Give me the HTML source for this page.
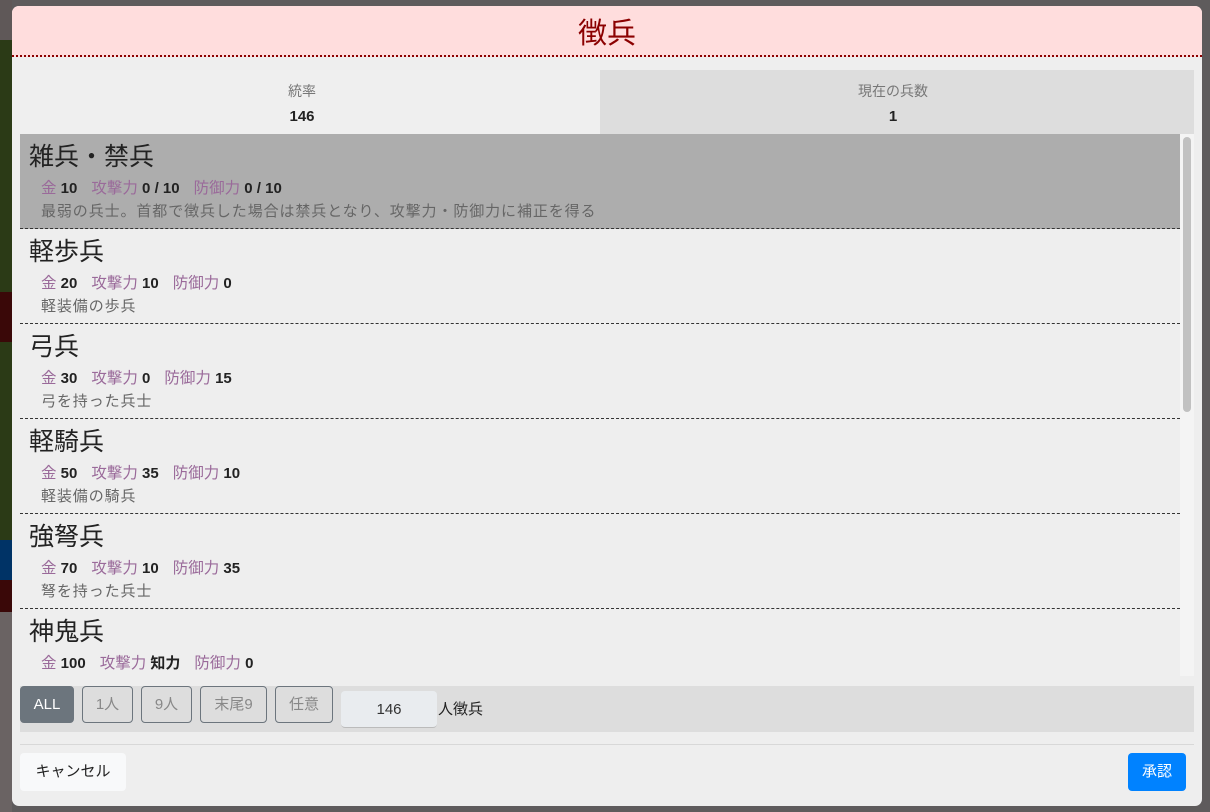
<!DOCTYPE html>
<html><head><meta charset="utf-8"><style>
*{box-sizing:border-box;margin:0;padding:0}
body{width:1210px;height:812px;overflow:hidden;background:#5e5b5c;font-family:"Liberation Sans","Noto Sans CJK JP",sans-serif;position:relative}
.bg{position:absolute;left:0;width:12px}
.modal{position:absolute;left:12px;top:6px;width:1190px;height:800px;background:#eee;border-radius:7px;overflow:hidden}
.hd{height:51px;background:#fdd;border-bottom:2px dotted #8b0000;text-align:center;color:#8b0000;font-size:29px;line-height:56px}
.stats{position:absolute;top:64px;left:8px;width:1174px;height:64px;display:flex}
.stats div{text-align:center;color:#777;font-size:14px;padding-top:11px}
.stats b{display:block;color:#222;font-size:15px;margin-top:7px}
.list{position:absolute;top:128px;left:8px;width:1160px;height:542px;overflow:hidden}
.sb{position:absolute;top:128px;left:1168px;width:14px;height:542px;background:#f4f4f4}
.sb div{position:absolute;left:3px;top:3px;width:8px;height:275px;background:#c1c1c1;border-radius:4px}
.it{height:95px;border-bottom:1px dashed #333;padding:9px 0 0 9px}
.it.sel{background:#adadad}
.t{font-size:25px;color:#222;line-height:29px}
.s{font-size:15px;color:#222;font-weight:bold;margin:8px 0 0 12px;line-height:18px}
.s span{color:#9a6a9a;font-weight:normal;font-size:15.5px}
.s i{display:inline-block;width:14px}
.d{font-size:15px;color:#666;margin:5px 0 0 12px;line-height:17px;letter-spacing:0.9px}
.bar{position:absolute;top:680px;left:8px;width:1174px;height:46px;background:#ddd}
.btn{position:absolute;top:0;height:37px;border:1px solid #6c757d;border-radius:4px;color:#888;font-size:15px;text-align:center;line-height:35px}
.hr{position:absolute;top:738px;left:8px;width:1174px;border-top:1px solid #d8d8d8}
</style></head><body>
<div class="bg" style="top:0;height:40px;background:#5f5858"></div>
<div class="bg" style="top:40px;height:252px;background:#2b3a16"></div>
<div class="bg" style="top:292px;height:50px;background:#3a0808"></div>
<div class="bg" style="top:342px;height:198px;background:#2b3a16"></div>
<div class="bg" style="top:540px;height:40px;background:#003366"></div>
<div class="bg" style="top:580px;height:32px;background:#3a0808"></div>
<div class="bg" style="top:612px;height:200px;background:#6a6363"></div>
<div class="modal">
<div class="hd">徴兵</div>
<div class="stats"><div style="width:580px;background:#efefef;padding-right:16px">統率<b>146</b></div><div style="width:594px;background:#ddd;padding-right:8px">現在の兵数<b>1</b></div></div>
<div class="list">
<div class="it sel"><div class="t">雑兵・禁兵</div><div class="s"><span>金</span> 10<i></i><span>攻撃力</span> 0 / 10<i></i><span>防御力</span> 0 / 10</div><div class="d">最弱の兵士。首都で徴兵した場合は禁兵となり、攻撃力・防御力に補正を得る</div></div>
<div class="it"><div class="t">軽歩兵</div><div class="s"><span>金</span> 20<i></i><span>攻撃力</span> 10<i></i><span>防御力</span> 0</div><div class="d">軽装備の歩兵</div></div>
<div class="it"><div class="t">弓兵</div><div class="s"><span>金</span> 30<i></i><span>攻撃力</span> 0<i></i><span>防御力</span> 15</div><div class="d">弓を持った兵士</div></div>
<div class="it"><div class="t">軽騎兵</div><div class="s"><span>金</span> 50<i></i><span>攻撃力</span> 35<i></i><span>防御力</span> 10</div><div class="d">軽装備の騎兵</div></div>
<div class="it"><div class="t">強弩兵</div><div class="s"><span>金</span> 70<i></i><span>攻撃力</span> 10<i></i><span>防御力</span> 35</div><div class="d">弩を持った兵士</div></div>
<div class="it"><div class="t">神鬼兵</div><div class="s"><span>金</span> 100<i></i><span>攻撃力</span> 知力<i></i><span>防御力</span> 0</div><div class="d"></div></div>
</div>
<div class="sb"><div></div></div>
<div class="bar">
<div class="btn" style="left:0;width:54px;background:#6c757d;color:#fff">ALL</div>
<div class="btn" style="left:62px;width:51px">1人</div>
<div class="btn" style="left:121px;width:51px">9人</div>
<div class="btn" style="left:180px;width:67px">末尾9</div>
<div class="btn" style="left:255px;width:58px">任意</div>
<div style="position:absolute;left:321px;top:5px;width:96px;height:37px;background:#e9ecef;border-radius:4px;border-bottom:1px solid #bbb;text-align:center;line-height:37px;font-size:15px;color:#333">146</div>
<div style="position:absolute;left:418px;top:5px;line-height:37px;font-size:15px;color:#222">人徴兵</div>
</div>
<div class="hr"></div>
<div style="position:absolute;left:8px;top:747px;width:106px;height:38px;background:#f8f9fa;border-radius:4px;font-size:15px;line-height:38px;text-align:center;color:#222">キャンセル</div>
<div style="position:absolute;left:1116px;top:747px;width:58px;height:38px;background:#0082ff;border-radius:4px;font-size:15px;line-height:38px;text-align:center;color:#fff">承認</div>
</div>
</body></html>
